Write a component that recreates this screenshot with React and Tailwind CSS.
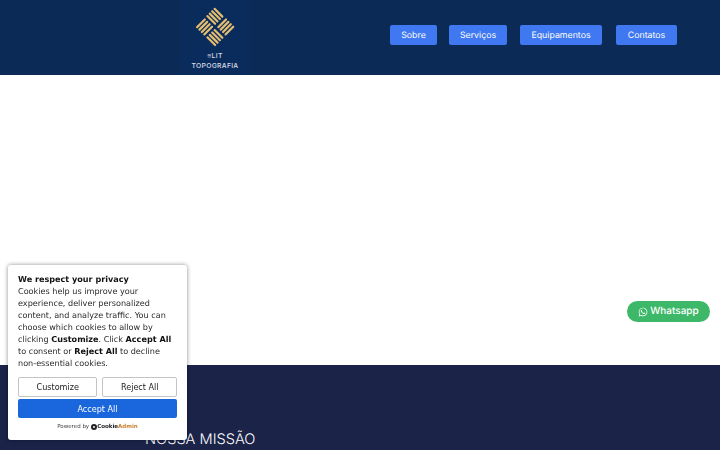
import { FaWhatsapp } from "react-icons/fa";

const NAV = [
  { label: "Sobre", w: "w-[47px]", mr: "mr-3" },
  { label: "Serviços", w: "w-[58px]", mr: "mr-[13px]" },
  { label: "Equipamentos", w: "w-[82px]", mr: "mr-[14px]" },
  { label: "Contatos", w: "w-[61px]", mr: "" },
];

function Logo() {
  // four groups of four bars, turned 45deg
  const bars = [];
  for (let i = 0; i < 4; i++) {
    bars.push(<rect key={"a" + i} x={0} y={0.5 + i * 3.4} width={13} height={2.2} rx={1} />);
    bars.push(<rect key={"b" + i} x={15.5 + i * 3.4} y={0} width={2.2} height={13} rx={1} />);
    bars.push(<rect key={"c" + i} x={0.5 + i * 3.4} y={15} width={2.2} height={13} rx={1} />);
    bars.push(<rect key={"d" + i} x={15} y={15.5 + i * 3.4} width={13} height={2.2} rx={1} />);
  }
  return (
    <svg width="40" height="40" viewBox="0 0 40 40" fill="#e5bd6e">
      <g transform="translate(20 0) rotate(45)">{bars}</g>
    </svg>
  );
}

export default function App() {
  return (
    <div className="h-[450px] overflow-hidden bg-white font-['DejaVu_Sans',sans-serif] [text-rendering:geometricPrecision]">
      <header className="h-[75px] bg-[#0b2a55] flex items-start">
        <div className="ml-[180px] w-[70px] h-[75px] bg-[#0a2c5c] flex flex-col items-center pt-[7px]">
          <Logo />
          <div className="mt-[4px] text-[#d9dde6] text-[6.8px] leading-[10px] tracking-[0.3px] font-medium font-['Inter',sans-serif] text-center">
            <div>≡LIT</div>
            <div>TOPOGRAFIA</div>
          </div>
        </div>
        <nav className="ml-[140px] mt-[25px] flex items-center">
          {NAV.map((n) => (
            <a
              key={n.label}
              className={`${n.w} ${n.mr} h-5 pt-px bg-[#3f78f0] rounded-[2px] text-white text-[8.8px] font-['Inter',sans-serif] flex items-center justify-center`}
            >
              {n.label}
            </a>
          ))}
        </nav>
      </header>

      <main className="h-[290px] relative">
        <a className="absolute left-[627px] top-[226px] w-[83px] h-[21px] rounded-full bg-[#3cb868] text-white text-[10px] font-medium font-['Inter',sans-serif] flex items-center justify-center gap-[2px]">
          <FaWhatsapp className="text-[10px]" />
          Whatsapp
        </a>
      </main>

      <section className="h-[85px] bg-[#1b2349] pl-[145px] pt-[63px]">
        <h2 className="text-white text-[14.6px] leading-[22px] font-['Inter',sans-serif] font-light">NOSSA MISSÃO</h2>
      </section>

      <div className="fixed left-2 top-[265px] w-[179px] h-[175px] bg-white rounded-[3px] shadow-[0_0_4px_rgba(0,0,0,0.45)] px-[10px] pt-2 text-[#2b2b2b] text-[8.1px] leading-[12px]">
        <p className="font-bold text-[#111] leading-[12px]">We respect your privacy</p>
        <p>
          Cookies help us improve your experience, deliver personalized content, and analyze traffic. You can choose which cookies to allow by clicking <b className="text-[#111]">Customize</b>. Click <b className="text-[#111]">Accept All</b> to consent or <b className="text-[#111]">Reject All</b> to decline non-essential cookies.
        </p>
        <div className="mt-[8px] flex gap-[5px]">
          <button className="w-[80px] h-5 border border-[#c4c4c4] rounded-[2px] text-[8.1px] text-[#222]">Customize</button>
          <button className="w-[75px] h-5 border border-[#c4c4c4] rounded-[2px] text-[8.1px] text-[#222]">Reject All</button>
        </div>
        <button className="block mt-[2px] w-[159px] h-[19px] bg-[#1a66dc] rounded-[2px] text-white text-[8.1px]">Accept All</button>
        <div className="mt-[5px] flex items-center justify-center text-[5.5px] leading-[8px] text-[#444]">
          Powered by
          <span className="ml-[2px] w-[6px] h-[6px] rounded-full border-2 border-[#222]"></span>
          <span className="font-bold text-[#222]">Cookie</span>
          <span className="font-bold text-[#c9822d]">Admin</span>
        </div>
      </div>
    </div>
  );
}
